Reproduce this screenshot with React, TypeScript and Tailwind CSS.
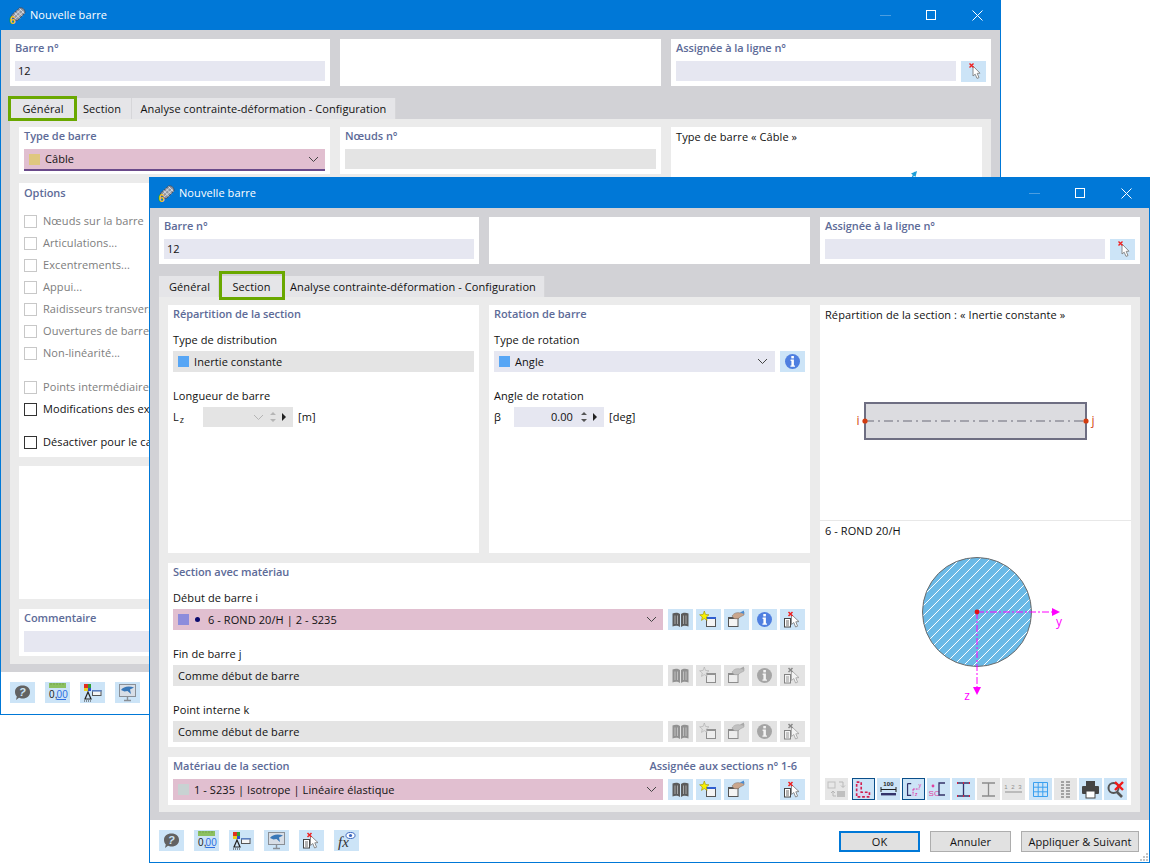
import React from 'react';

const font = { fontFamily: '"Open Sans", "Noto Sans", sans-serif' };

// petites icones de la barre d'outils, dessinees dans un cadre 25x21
const IconBook = () => (
  <svg width="25" height="21" viewBox="0 0 25 21">
    <path d="M12 5C10 3.5 7 3.5 4.5 4.5V17.5C7 16.5 10 16.5 12 18ZM13 5C15 3.5 18 3.5 20.5 4.5V17.5C18 16.5 15 16.5 13 18Z" fill="#5c5c5c" />
    <path d="M7 6.5V15M9.5 6.5V15M15.5 6.5V15M18 6.5V15" stroke="#a8a8a8" strokeWidth="1" />
  </svg>
);

const IconNew = () => (
  <svg width="25" height="21" viewBox="0 0 25 21">
    <rect x="10.5" y="8.5" width="9" height="9" fill="#f4f4f4" stroke="#555" />
    <rect x="10" y="8" width="10" height="2" fill="#2f5fd0" />
    <path d="M8.3 2L9.5 5.4L13 5.8L10.3 8L11.1 11.4L8.3 9.6L5.5 11.4L6.3 8L3.6 5.8L7.1 5.4Z" fill="#f8f000" stroke="#9c8e00" strokeWidth="0.6" />
  </svg>
);

const IconEdit = () => (
  <svg width="25" height="21" viewBox="0 0 25 21">
    <rect x="4.5" y="8.5" width="9.5" height="9" fill="#f4f4f4" stroke="#555" />
    <rect x="4" y="8" width="10.5" height="2" fill="#555" />
    <path d="M8 7C10 4 13 3 16 4L20 3V6L16 8C15 10 12 10 10 9.5Z" fill="#c9a58c" stroke="#7b6a60" strokeWidth="0.5" />
    <path d="M16 3.5L20 1.5V5Z" fill="#4a8ad0" />
  </svg>
);

const IconInfo = () => (
  <svg width="25" height="21" viewBox="0 0 25 21">
    <circle cx="12.5" cy="10.5" r="7.5" fill="#4f7fe0" />
    <rect x="11.3" y="5" width="2.6" height="2.4" fill="#fff" />
    <path d="M10.6 8.6H13.9V14.4H15V15.8H10.4V14.4H11.4V10H10.6Z" fill="#fff" />
  </svg>
);

const IconPick = () => (
  <svg width="25" height="21" viewBox="0 0 25 21">
    <rect x="4.5" y="9.5" width="6" height="8.5" fill="#fff" stroke="#444" />
    <path d="M6 12H9M6 14H9M6 16H9" stroke="#444" strokeWidth="0.8" />
    <path d="M11.5 5.5V15.5L13.8 13.5L15.6 18L17.6 17.2L15.8 12.8L19 12.6Z" fill="#fff" stroke="#808080" strokeWidth="0.9" />
    <path d="M8.5 3L12.5 7M12.5 3L8.5 7" stroke="#f02020" strokeWidth="1.5" />
  </svg>
);

const IconCursor = () => (
  <svg width="25" height="21" viewBox="0 0 25 21">
    <path d="M12 5V15L14.2 13.2L16 17.4L18 16.6L16.2 12.4L19 12.2Z" fill="#fff" stroke="#808080" strokeWidth="0.9" />
    <path d="M8.5 2.5L12.5 6.5M12.5 2.5L8.5 6.5" stroke="#f02020" strokeWidth="1.4" />
  </svg>
);

const IconHelp = () => (
  <svg width="25" height="21" viewBox="0 0 25 21">
    <path d="M5 10C5 6 8 3.5 12.5 3.5S20 6 20 10S17 16.5 12.5 16.5C11 16.5 10 16.2 9 15.8L6 18L6.8 14.4C5.6 13.2 5 11.8 5 10Z" fill="#626262" />
    <text x="12.5" y="14" textAnchor="middle" fontSize="11" fontWeight="700" fontStyle="italic" fill="#cce4f7" fontFamily="Liberation Sans">?</text>
  </svg>
);

const IconDecimal = () => (
  <svg width="25" height="21" viewBox="0 0 25 21">
    <rect x="4" y="1" width="17" height="5" fill="#8cc060" />
    <path d="M6 1V3M9 1V3M12 1V3M15 1V3M18 1V3" stroke="#6a9a44" strokeWidth="0.7" />
    <text x="4" y="16" fontSize="10" fill="#222" fontFamily="Liberation Sans">0,</text>
    <text x="11.5" y="16" fontSize="10" fill="#2f6fe0" fontFamily="Liberation Sans">00</text>
    <path d="M11.5 17.5H21" stroke="#2f6fe0" />
  </svg>
);

const IconTree = () => (
  <svg width="25" height="21" viewBox="0 0 25 21">
    <rect x="4" y="2" width="4" height="4" fill="#e03020" />
    <rect x="8" y="2" width="3" height="4" fill="#30a030" />
    <rect x="4" y="6" width="4" height="3" fill="#e8d020" />
    <rect x="8" y="6" width="3" height="3" fill="#3050d0" />
    <path d="M8 10L5 17H11Z" fill="none" stroke="#222" strokeWidth="1.2" />
    <rect x="12.5" y="8.5" width="8.5" height="5" fill="#f4f4f4" stroke="#555" />
    <rect x="12" y="8" width="9.5" height="1.6" fill="#5a7fc0" />
    <path d="M4 19H12" stroke="#333" strokeDasharray="1 1" />
  </svg>
);

const IconScreen = () => (
  <svg width="25" height="21" viewBox="0 0 25 21">
    <rect x="4.5" y="2.5" width="16" height="12" fill="#d8dee6" stroke="#8a8f96" />
    <path d="M6 8C8 4.5 14 3.5 19 5.5L15 7.5L16 12L12.5 9L9.5 9.5Z" fill="#3a78b8" />
    <path d="M12.5 15V18M9 18.5H16" stroke="#8a8f96" strokeWidth="1.4" />
  </svg>
);

const IconFx = () => (
  <svg width="25" height="21" viewBox="0 0 25 21">
    <text x="4" y="17" fontSize="15" fontStyle="italic" fill="#333" fontFamily="Liberation Serif">fx</text>
    <ellipse cx="16.5" cy="5.5" rx="4.5" ry="3" fill="#fff" stroke="#3a66c0" />
    <circle cx="16.5" cy="5.5" r="1.6" fill="#3a66c0" />
  </svg>
);

const IconAdapt = () => (
  <svg width="23" height="21" viewBox="0 0 23 21">
    <rect x="3" y="3" width="7" height="6" fill="#e8e8e8" stroke="#9a9a9a" />
    <rect x="12" y="12" width="8" height="6" fill="#9a9a9a" />
    <path d="M14 3H18V8M16 6.5L18 8.5L20 6.5M8 12V17H11M6 14L8 12L10 14" fill="none" stroke="#8a8a8a" />
  </svg>
);

const IconAngle = () => (
  <svg width="23" height="21" viewBox="0 0 23 21">
    <path d="M4 2.5H9V13.5H18V18.5H4Z" fill="#d8d8f4" />
    <path d="M4 2.5H9V13.5H18V18.5H4Z" fill="none" stroke="#d02050" strokeWidth="1.8" strokeDasharray="3 2" />
  </svg>
);

const IconDim = () => (
  <svg width="23" height="21" viewBox="0 0 23 21">
    <text x="11.5" y="7" textAnchor="middle" fontSize="6" fontWeight="700" fill="#222" fontFamily="Liberation Sans">100</text>
    <path d="M4 8V13M19 8V13M4 10.5H19" stroke="#222" />
    <rect x="4" y="14" width="15" height="2.4" fill="#33336a" />
  </svg>
);

const IconAxes = () => (
  <svg width="23" height="21" viewBox="0 0 23 21">
    <path d="M5 4H9M5 4V17H9" fill="none" stroke="#33336a" strokeWidth="1.3" />
    <path d="M11 10H18M11 10V17" stroke="#e020a0" strokeDasharray="2 1" />
    <text x="17" y="8" fontSize="6" fill="#e020a0" fontFamily="Liberation Sans">y</text>
    <text x="13" y="18" fontSize="6" fill="#e020a0" fontFamily="Liberation Sans">z</text>
  </svg>
);

const IconShear = () => (
  <svg width="23" height="21" viewBox="0 0 23 21">
    <circle cx="6" cy="7" r="1.4" fill="#e040a0" />
    <text x="1.5" y="17" fontSize="8" fill="#e040a0" fontFamily="Liberation Sans">SC</text>
    <path d="M18 4H12V16H18" fill="none" stroke="#33336a" strokeWidth="1.3" />
  </svg>
);

const IconProfile = ({ color, dots }: { color: string; dots?: boolean }) => (
  <svg width="23" height="21" viewBox="0 0 23 21">
    <path d="M5 4H18M5 17H18M11.5 4V17" fill="none" stroke={color} strokeWidth="1.3" />
    {dots && <path d="M5 4H6M17 4H18M5 17H6M17 17H18M11 4H12M11 17H12" stroke="#e02040" strokeWidth="2" />}
  </svg>
);

const IconNumbers = () => (
  <svg width="23" height="21" viewBox="0 0 23 21">
    <text x="11.5" y="10" textAnchor="middle" fontSize="6" letterSpacing="1" fill="#909090" fontFamily="Liberation Sans">1 2 3</text>
    <path d="M3 13H20" stroke="#909090" />
  </svg>
);

const IconGrid = () => (
  <svg width="23" height="21" viewBox="0 0 23 21">
    <path d="M4.5 3.5H18.5V17.5H4.5ZM4.5 8.2H18.5M4.5 12.8H18.5M9.2 3.5V17.5M13.8 3.5V17.5" fill="none" stroke="#3aa0f0" />
  </svg>
);

const IconList = () => (
  <svg width="23" height="21" viewBox="0 0 23 21">
    <path d="M7 3H10M7 6H10M7 9H10M7 12H10M7 15H10M7 18H10M12 3H16M12 6H16M12 9H16M12 12H16M12 15H16M12 18H16" stroke="#8c8c8c" strokeWidth="1.6" />
  </svg>
);

const IconPrint = () => (
  <svg width="23" height="21" viewBox="0 0 23 21">
    <rect x="7" y="2" width="9" height="5" fill="#444" />
    <rect x="3" y="7" width="17" height="8" rx="1" fill="#444" />
    <rect x="7" y="12" width="9" height="7" fill="#fff" stroke="#444" />
  </svg>
);

const IconZoomOff = () => (
  <svg width="23" height="21" viewBox="0 0 23 21">
    <circle cx="9.5" cy="9" r="5" fill="none" stroke="#555" strokeWidth="2" />
    <path d="M13 13L18 18" stroke="#555" strokeWidth="2.6" />
    <path d="M11 3L19 11M19 3L11 11" stroke="#f01818" strokeWidth="2.4" />
  </svg>
);

const Tool = ({ off, children }: { off?: boolean; children: React.ReactNode }) => (
  <div className={`w-[25px] h-[21px] shrink-0 ${off ? 'bg-[#e3e3e3]' : 'bg-[#cce4f7]'}`}>
    <div className={off ? 'grayscale opacity-60' : ''}>{children}</div>
  </div>
);

const Mini = ({ kind, className = '', children }: { kind: 'on' | 'off' | 'sel'; className?: string; children: React.ReactNode }) => (
  <div
    className={`w-[23px] h-[22px] flex items-center justify-center ${className} ${
      kind === 'off' ? 'bg-[#e6e6e6]' : kind === 'sel' ? 'bg-[#cce4f7] border border-[#0a4f8a]' : 'bg-[#cce4f7]'
    }`}
  >
    {children}
  </div>
);

const Chevron = ({ color = '#444' }: { color?: string }) => (
  <svg width="11" height="7" viewBox="0 0 11 7">
    <path d="M1 1L5.5 5.5L10 1" fill="none" stroke={color} />
  </svg>
);

const Spin = ({ color = '#555' }: { color?: string }) => (
  <svg width="26" height="16" viewBox="0 0 26 16">
    <path d="M5 6L8 3L11 6ZM5 10L8 13L11 10Z" fill={color} />
    <path d="M17 4L21 8L17 12Z" fill="#222" />
  </svg>
);

const Swatch = ({ color }: { color: string }) => <span className="w-[11px] h-[11px] shrink-0" style={{ backgroundColor: color }} />;

const CardTitle = ({ children, className = '' }: { children: React.ReactNode; className?: string }) => (
  <div className={`font-semibold text-[#5d6b98] leading-[16px] tracking-[-0.06px] ${className}`}>{children}</div>
);

const Label = ({ children, className = '' }: { children: React.ReactNode; className?: string }) => (
  <div className={`leading-[16px] ${className}`}>{children}</div>
);

const TitleBar = () => (
  <div className="h-[30px] bg-[#0078d7] flex items-center pl-[8px] text-white shrink-0">
    <svg width="17" height="17" viewBox="0 0 17 17" className="shrink-0">
      <path d="M2.5 8L10.5 1C13 0 16.5 2.5 16 6L8.5 13.5C6 14 3 11 2.5 8Z" fill="#8e94a0" stroke="#3e4450" strokeWidth="0.7" />
      <path d="M5.5 5.5L11 11.5M8 3.5L13.5 9.2M10.5 1.5L15.5 6.5M4 10L12 2.5M6 12L14.5 4.5" stroke="#f0f2f6" strokeWidth="0.7" />
      <text x="0.5" y="16.5" fontSize="11" fontWeight="700" fill="#f6c21c" fontFamily="Liberation Sans">6</text>
    </svg>
    <span className="ml-[4px]">Nouvelle barre</span>
    <div className="ml-auto flex items-center h-full">
      <div className="w-[46px] flex justify-center">
        <span className="w-[11px] h-px bg-[#4c9ee0]" />
      </div>
      <div className="w-[46px] flex justify-center">
        <span className="w-[10px] h-[10px] border border-white" />
      </div>
      <div className="w-[46px] flex justify-center">
        <svg width="11" height="11" viewBox="0 0 11 11">
          <path d="M0.5 0.5L10.5 10.5M10.5 0.5L0.5 10.5" stroke="#fff" />
        </svg>
      </div>
    </div>
  </div>
);

const HeaderRow = () => (
  <div className="grid grid-cols-[320px_321px_320px] gap-x-[10px] h-[47px] shrink-0">
    <div className="bg-white px-[5px] pt-px">
      <CardTitle>Barre n°</CardTitle>
      <div className="mt-[5px] h-[20px] bg-[#e6e7f1] pl-[3px] leading-[20px]">12</div>
    </div>
    <div className="bg-white" />
    <div className="bg-white px-[5px] pt-px">
      <CardTitle>Assignée à la ligne n°</CardTitle>
      <div className="mt-[5px] flex gap-[5px]">
        <div className="h-[20px] w-[280px] bg-[#e6e7f1]" />
        <div className="w-[25px] h-[21px] bg-[#cce4f7]">
          <IconCursor />
        </div>
      </div>
    </div>
  </div>
);

const Tabs = ({ widths, box }: { widths: string[]; box: string }) => {
  const names = ['Général', 'Section', 'Analyse contrainte-déformation - Configuration'];
  return (
    <div className="mt-[12px] h-[21px] flex items-stretch relative shrink-0">
      {names.map((name, i) => (
        <div key={name} className={`${widths[i]} flex items-center justify-center pt-[2px] bg-[#e5e5e8] border-r border-[#d6d6d9]`}>
          {name}
        </div>
      ))}
      {/* cadre vert de mise en evidence, pose par-dessus les onglets */}
      <div className={`absolute border-[3px] border-[#6aa800] ${box}`} />
    </div>
  );
};

const Footer = ({ children }: { children: React.ReactNode }) => (
  <div className="flex-1 bg-white flex items-start pl-[9px] pt-[10px] gap-[10px]">{children}</div>
);

const BackWindow = () => {
  // libelles coupes par la fenetre du dessus, comme sur la capture
  const options = [
    { text: 'Nœuds sur la barre' },
    { text: 'Articulations...' },
    { text: 'Excentrements...' },
    { text: 'Appui...' },
    { text: 'Raidisseurs transvers' },
    { text: 'Ouvertures de barre.' },
    { text: 'Non-linéarité...' },
    { text: 'Points intermédiaires', gap: 'mt-[12px]' },
    { text: 'Modifications des ex', on: true },
    { text: 'Désactiver pour le ca', on: true, gap: 'mt-[11px]' },
  ];
  return (
    <div className="absolute left-0 top-[-1px] w-[1001px] h-[716px] border border-[#0078d7] bg-white flex flex-col">
      <TitleBar />
      <div className="h-[642px] bg-[#d2d2d6] pl-[9px] pt-[9px] pr-[9px] flex flex-col shrink-0">
        <HeaderRow />
        <Tabs widths={['w-[67px]', 'w-[55px] pr-[4px]', 'w-[264px]']} box="left-[-2px] top-[-2px] w-[69px] h-[25px]" />
        <div className="h-[545px] bg-[#ebebeb] px-[9px] pt-[8px] grid grid-cols-[311px_321px_311px] gap-x-[10px] shrink-0">
          <div className="flex flex-col">
            <div className="h-[47px] bg-white px-[5px] pt-px">
              <CardTitle>Type de barre</CardTitle>
              <div className="mt-[5px] h-[22px] bg-[#e1bfd0] border-b-2 border-[#6a4a8a] flex items-center pl-[5px] pr-[6px] gap-[5px]">
                <Swatch color="#dfc77f" />
                <span className="pt-px">Câble</span>
                <span className="ml-auto">
                  <Chevron />
                </span>
              </div>
            </div>
            <div className="mt-[9px] h-[274px] bg-white px-[5px] pt-[2px]">
              <CardTitle>Options</CardTitle>
              <div className="mt-[9px]">
                {options.map((o) => (
                  <div key={o.text} className={`h-[22px] flex items-center gap-[6px] whitespace-nowrap ${o.gap ?? ''} ${o.on ? '' : 'text-[#7d7d7d]'}`}>
                    <span className={`w-[13px] h-[13px] border ${o.on ? 'border-[#333]' : 'border-[#c8c8c8]'} bg-white shrink-0`} />
                    {o.text}
                  </div>
                ))}
              </div>
            </div>
            <div className="mt-[9px] h-[133px] bg-white" />
            <div className="mt-[10px] h-[47px] bg-white px-[5px] pt-px">
              <CardTitle>Commentaire</CardTitle>
              <div className="mt-[5px] h-[21px] bg-[#e6e7f1]" />
            </div>
          </div>
          <div className="h-[47px] bg-white px-[5px] pt-px">
            <CardTitle>Nœuds n°</CardTitle>
            <div className="mt-[5px] h-[20px] bg-[#e4e4e4]" />
          </div>
          <div className="h-[529px] bg-white">
            <div className="pl-[5px] pt-[2px] leading-[16px]">Type de barre « Câble »</div>
            <svg width="311" height="40" viewBox="0 0 311 40" className="block">
              <path d="M241 33L244 27" stroke="#1e9fd8" strokeWidth="1.4" />
              <path d="M246 26L240 28.5L244.5 32Z" fill="#1e9fd8" />
            </svg>
          </div>
        </div>
      </div>
      <Footer>
        <Tool><IconHelp /></Tool>
        <Tool><IconDecimal /></Tool>
        <Tool><IconTree /></Tool>
        <Tool><IconScreen /></Tool>
      </Footer>
    </div>
  );
};

const ToolRow = ({ off }: { off?: boolean }) => (
  <div className="flex gap-[3px]">
    <Tool off={off}><IconBook /></Tool>
    <Tool off={off}><IconNew /></Tool>
    <Tool off={off}><IconEdit /></Tool>
    <Tool off={off}><IconInfo /></Tool>
    <Tool off={off}><IconPick /></Tool>
  </div>
);

const hatch = Array.from({ length: 25 }, (_, i) => 157 + (i - 12) * 10);

const FrontWindow = () => (
  <div className="absolute left-[149px] top-[177px] w-[1001px] h-[686px] border border-[#0078d7] bg-white flex flex-col z-10">
    <TitleBar />
    <div className="h-[612px] bg-[#d2d2d6] pl-[9px] pr-[9px] pt-[9px] flex flex-col shrink-0">
      <HeaderRow />
      <Tabs widths={['w-[60px] pl-[2px]', 'w-[66px]', 'w-[260px] pr-[3px]']} box="left-[60px] top-[-5px] w-[66px] h-[29px]" />
      <div className="h-[515px] bg-[#ebebeb] px-[9px] pt-[8px] grid grid-cols-[642px_311px] gap-x-[10px] shrink-0">
        <div className="flex flex-col">
          <div className="grid grid-cols-[311px_321px] gap-x-[10px] h-[248px] shrink-0">
            <div className="bg-white px-[5px] pt-px">
              <CardTitle>Répartition de la section</CardTitle>
              <Label className="mt-[10px]">Type de distribution</Label>
              <div className="mt-[3px] h-[21px] bg-[#e4e4e4] flex items-center pl-[5px] gap-[5px]">
                <Swatch color="#57a6f5" />
                <span className="pt-px">Inertie constante</span>
              </div>
              <Label className="mt-[16px]">Longueur de barre</Label>
              <div className="mt-[3px] flex items-center h-[20px]">
                <span className="w-[30px] flex">
                  <span>L</span>
                  <span className="text-[9px] leading-[12px] mt-[5px] ml-px">z</span>
                </span>
                <div className="w-[90px] h-[20px] bg-[#e4e4e4] flex items-center justify-end pr-[2px] gap-px">
                  <Chevron color="#b5b5b5" />
                  <Spin color="#b5b5b5" />
                </div>
                <span className="ml-[5px]">[m]</span>
              </div>
            </div>
            <div className="bg-white px-[5px] pt-px">
              <CardTitle>Rotation de barre</CardTitle>
              <Label className="mt-[10px]">Type de rotation</Label>
              <div className="mt-[3px] flex gap-[5px]">
                <div className="w-[281px] h-[21px] bg-[#e6e7f1] flex items-center pl-[5px] pr-[7px] gap-[5px]">
                  <Swatch color="#57a6f5" />
                  <span className="pt-px">Angle</span>
                  <span className="ml-auto">
                    <Chevron />
                  </span>
                </div>
                <Tool><IconInfo /></Tool>
              </div>
              <Label className="mt-[16px]">Angle de rotation</Label>
              <div className="mt-[3px] flex items-center h-[20px]">
                <span className="w-[20px]">β</span>
                <div className="w-[90px] h-[20px] bg-[#e6e7f1] flex items-center justify-end pr-[2px] gap-[3px]">
                  <span>0.00</span>
                  <Spin />
                </div>
                <span className="ml-[5px]">[deg]</span>
              </div>
            </div>
          </div>
          <div className="mt-[10px] h-[184px] bg-white px-[5px] pt-px shrink-0">
            <CardTitle>Section avec matériau</CardTitle>
            <Label className="mt-[10px]">Début de barre i</Label>
            <div className="mt-[3px] flex gap-[5px]">
              <div className="w-[490px] h-[21px] bg-[#e1bfd0] flex items-center pl-[5px] pr-[6px]">
                <Swatch color="#8c8cdc" />
                <span className="ml-[6px] w-[5px] h-[5px] rounded-full bg-[#0a0a6e]" />
                <span className="ml-[8px] pt-px">6 - ROND 20/H | 2 - S235</span>
                <span className="ml-auto">
                  <Chevron />
                </span>
              </div>
              <ToolRow />
            </div>
            <Label className="mt-[16px]">Fin de barre j</Label>
            <div className="mt-[3px] flex gap-[5px]">
              <div className="w-[490px] h-[21px] bg-[#e4e4e4] flex items-center pl-[5px] pt-px">Comme début de barre</div>
              <ToolRow off />
            </div>
            <Label className="mt-[16px]">Point interne k</Label>
            <div className="mt-[3px] flex gap-[5px]">
              <div className="w-[490px] h-[21px] bg-[#e4e4e4] flex items-center pl-[5px] pt-px">Comme début de barre</div>
              <ToolRow off />
            </div>
          </div>
          <div className="mt-[10px] h-[48px] bg-white px-[5px] pt-px shrink-0">
            <div className="flex justify-between">
              <CardTitle>Matériau de la section</CardTitle>
              <CardTitle className="pr-[8px]">Assignée aux sections n° 1-6</CardTitle>
            </div>
            <div className="mt-[5px] flex gap-[5px]">
              <div className="w-[490px] h-[21px] bg-[#e1bfd0] flex items-center pl-[5px] pr-[6px] gap-[5px]">
                <Swatch color="#c8d2d2" />
                <span className="pt-px">1 - S235 | Isotrope | Linéaire élastique</span>
                <span className="ml-auto">
                  <Chevron />
                </span>
              </div>
              <div className="flex gap-[3px]">
                <Tool><IconBook /></Tool>
                <Tool><IconNew /></Tool>
                <Tool><IconEdit /></Tool>
                <div className="w-[25px]" />
                <Tool><IconPick /></Tool>
              </div>
            </div>
          </div>
        </div>
        <div className="h-[500px] bg-white flex flex-col">
          <div className="h-[216px] border-b border-[#e8e8e8] shrink-0">
            <div className="pl-[5px] pt-[2px] leading-[16px]">Répartition de la section : « Inertie constante »</div>
            <svg width="311" height="196" viewBox="0 0 311 196" className="block">
              <rect x="45" y="80" width="221" height="36" fill="#dcdce0" stroke="#6e6e82" strokeWidth="2" />
              <path d="M45 98H266" stroke="#6a6a78" strokeWidth="1.2" strokeDasharray="9 4 2 4" />
              <circle cx="45" cy="98" r="2.6" fill="#d23c10" />
              <circle cx="266" cy="98" r="2.6" fill="#d23c10" />
              <text x="38" y="102" textAnchor="middle" fontSize="12" fill="#d23c10" fontFamily="Open Sans">i</text>
              <text x="273" y="102" textAnchor="middle" fontSize="12" fill="#d23c10" fontFamily="Open Sans">j</text>
            </svg>
          </div>
          <div className="pl-[5px] pt-[2px] leading-[16px]">6 - ROND 20/H</div>
          <svg width="311" height="239" viewBox="0 0 311 239" className="block shrink-0">
            <defs>
              <clipPath id="rond">
                <circle cx="157" cy="73" r="54.5" />
              </clipPath>
            </defs>
            <circle cx="157" cy="73" r="54.5" fill="#6ab9e6" />
            <g clipPath="url(#rond)" stroke="#fff" strokeWidth="1">
              {hatch.map((x) => (
                <line key={x} x1={x - 70} y1={143} x2={x + 70} y2={3} />
              ))}
            </g>
            <circle cx="157" cy="73" r="54.5" fill="none" stroke="#6a6a6a" strokeWidth="1" />
            <path d="M157 73H232" stroke="#ff00ff" strokeDasharray="7 2 2 2" />
            <path d="M157 73V148" stroke="#ff00ff" strokeDasharray="7 2 2 2" />
            <path d="M232 69L240 73L232 77Z" fill="#ff00ff" />
            <path d="M153 148L157 156L161 148Z" fill="#ff00ff" />
            <circle cx="157" cy="73" r="2.4" fill="#e01010" />
            <text x="239" y="87" textAnchor="middle" fontSize="12" fill="#ff00ff" fontFamily="Open Sans">y</text>
            <text x="147" y="161" textAnchor="middle" fontSize="12" fill="#ff00ff" fontFamily="Open Sans">z</text>
          </svg>
          <div className="flex pl-[5px] gap-[2px]">
            <Mini kind="off"><span className="grayscale opacity-50 flex"><IconAdapt /></span></Mini>
            <Mini kind="sel" className="ml-[2px]"><IconAngle /></Mini>
            <Mini kind="on"><IconDim /></Mini>
            <Mini kind="sel"><IconAxes /></Mini>
            <Mini kind="on"><IconShear /></Mini>
            <Mini kind="on"><IconProfile color="#33336a" dots /></Mini>
            <Mini kind="off"><IconProfile color="#8c8c8c" /></Mini>
            <Mini kind="off"><IconNumbers /></Mini>
            <Mini kind="on" className="ml-[2px]"><IconGrid /></Mini>
            <Mini kind="off"><IconList /></Mini>
            <Mini kind="on"><IconPrint /></Mini>
            <Mini kind="on"><IconZoomOff /></Mini>
          </div>
        </div>
      </div>
    </div>
    <div className="flex-1 bg-white flex items-start pl-[9px] pt-[10px] relative">
      <div className="flex gap-[10px]">
        <Tool><IconHelp /></Tool>
        <Tool><IconDecimal /></Tool>
        <Tool><IconTree /></Tool>
        <Tool><IconScreen /></Tool>
        <Tool><IconPick /></Tool>
        <Tool><IconFx /></Tool>
      </div>
      <div className="ml-auto flex gap-[10px] pr-[10px] pt-px">
        <div className="w-[81px] h-[21px] border-2 border-[#0078d7] bg-[#e1e1e1] flex items-center justify-center pt-px">OK</div>
        <div className="w-[81px] h-[21px] border border-[#adadad] bg-[#e1e1e1] flex items-center justify-center pt-px">Annuler</div>
        <div className="w-[118px] h-[21px] border border-[#adadad] bg-[#e1e1e1] flex items-center justify-center pt-px">Appliquer &amp; Suivant</div>
      </div>
      <svg width="10" height="10" viewBox="0 0 10 10" className="absolute right-0 bottom-0">
        <path d="M7 1H9V3H7ZM4 4H6V6H4ZM7 4H9V6H7ZM1 7H3V9H1ZM4 7H6V9H4ZM7 7H9V9H7Z" fill="#c4c4c4" />
      </svg>
    </div>
  </div>
);

export default function App() {
  return (
    <div className="relative w-[1152px] h-[864px] bg-white overflow-hidden text-[11px] text-[#111] tracking-[0.08px]" style={font}>
      <BackWindow />
      <FrontWindow />
    </div>
  );
}
